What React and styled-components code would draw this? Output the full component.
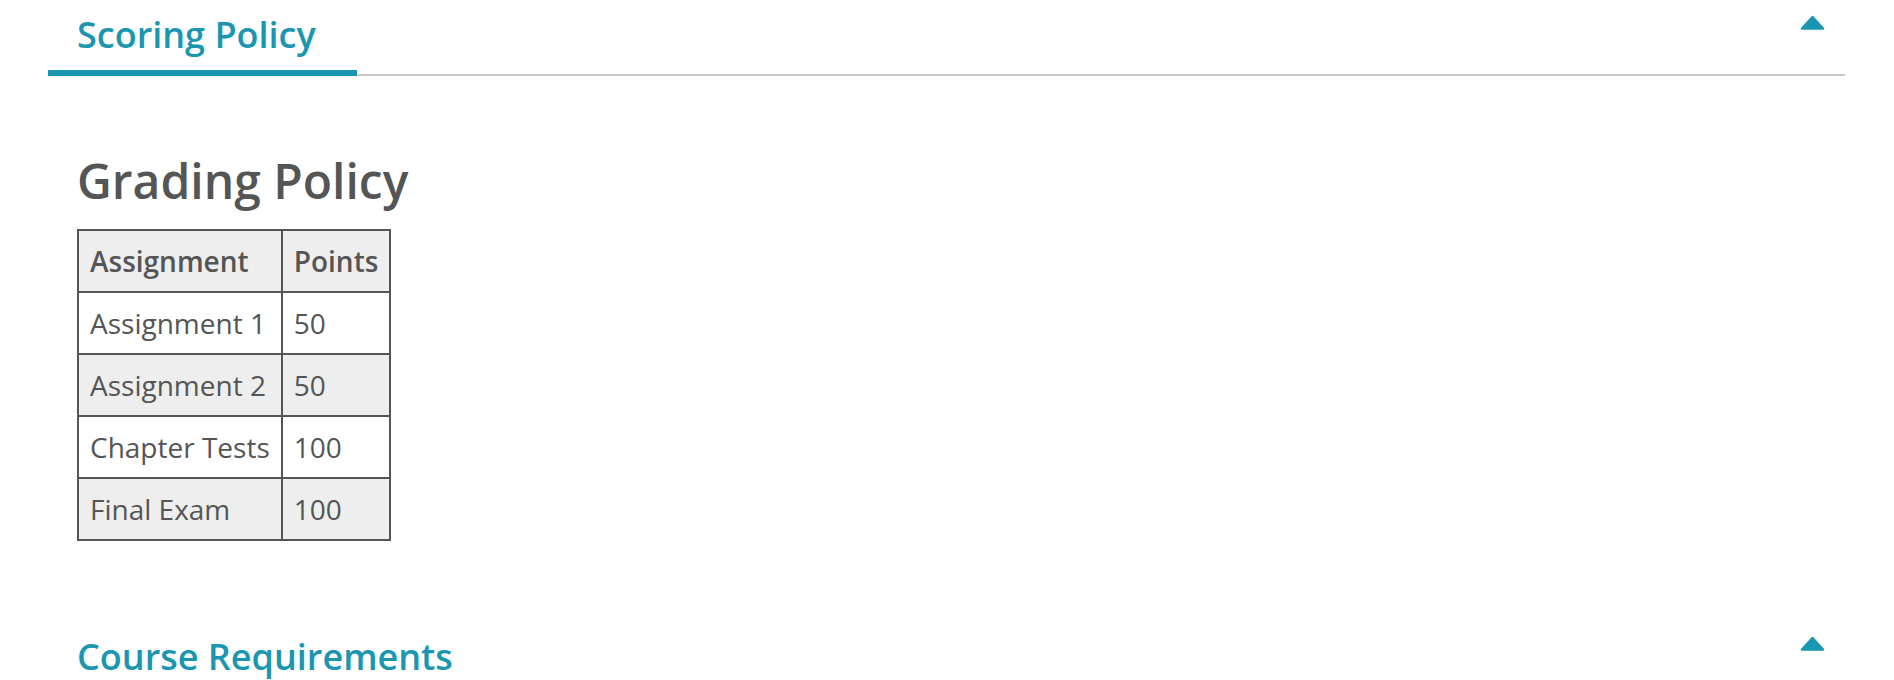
import React from "react";
import styled, { createGlobalStyle } from "styled-components";

const GlobalStyle = createGlobalStyle`
  body {
    margin: 0;
    background: #fff;
    font-family: "Open Sans", "Noto Sans", sans-serif;
  }
`;

const rows = [
  { name: "Assignment 1", points: 50 },
  { name: "Assignment 2", points: 50 },
  { name: "Chapter Tests", points: 100 },
  { name: "Final Exam", points: 100 },
];

function Caret() {
  return (
    <CaretIcon viewBox="0 0 25 15" aria-hidden="true">
      <polygon
        points="2,13.5 12.5,2 23,13.5"
        fill="#1a96b0"
        stroke="#1a96b0"
        strokeWidth="2.5"
        strokeLinejoin="round"
      />
    </CaretIcon>
  );
}

export default function App() {
  return (
    <Page>
      <GlobalStyle />
      <Section>
        <TabBar>
          <Tab>Scoring Policy</Tab>
          <Caret />
        </TabBar>
        <Content>
          <Heading>Grading Policy</Heading>
          <Table>
            <thead>
              <tr>
                <Th>Assignment</Th>
                <Th>Points</Th>
              </tr>
            </thead>
            <tbody>
              {rows.map((r, i) => (
                <Row key={r.name} shaded={i % 2 === 1}>
                  <Td>{r.name}</Td>
                  <Td>{r.points}</Td>
                </Row>
              ))}
            </tbody>
          </Table>
        </Content>
      </Section>
      <Section>
        <SectionHeader>
          <SectionTitle>Course Requirements</SectionTitle>
          <Caret />
        </SectionHeader>
      </Section>
    </Page>
  );
}

const Page = styled.div`
  padding: 0 49px 0 48px;
`;
const Section = styled.div``;
const TabBar = styled.div`
  display: flex;
  justify-content: space-between;
  align-items: flex-start;
  border-bottom: 2px solid #c8c8c8;
`;
const Tab = styled.div`
  width: 280px;
  padding: 11px 0 11px 29px;
  margin-bottom: -2px;
  border-bottom: 6px solid #1a96b0;
  color: #1a96b0;
  font-size: 36px;
  line-height: 48px;
  font-weight: 600;
  white-space: nowrap;
`;
const CaretIcon = styled.svg`
  width: 25px;
  height: 15px;
  margin: 15px 20px 0 0;
  flex-shrink: 0;
`;
const Content = styled.div`
  padding: 72px 0 80px 29px;
`;
const Heading = styled.h2`
  margin: 0 0 16px;
  font-size: 48px;
  font-weight: 600;
  color: #555;
`;
const Table = styled.table`
  border-collapse: collapse;
  color: #555;
  font-size: 28px;
  line-height: 40px;
`;
const Th = styled.th`
  border: 2px solid #555;
  padding: 10px 11px;
  text-align: left;
  font-weight: 600;
  background: #eee;
`;
const Row = styled.tr`
  background: ${(p) => (p.shaded ? "#eee" : "#fff")};
`;
const Td = styled.td`
  border: 2px solid #555;
  padding: 10px 11px;
`;
const SectionHeader = styled.div`
  display: flex;
  justify-content: space-between;
  align-items: flex-start;
`;
const SectionTitle = styled.div`
  padding: 12px 0 0 29px;
  color: #1a96b0;
  font-size: 36px;
  line-height: 48px;
  font-weight: 600;
`;
